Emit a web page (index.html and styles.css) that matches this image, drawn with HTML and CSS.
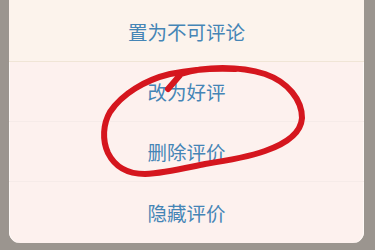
FILE: index.html
```html
<!DOCTYPE html>
<html lang="zh-CN">
<head>
<meta charset="utf-8">
<link rel="stylesheet" href="styles.css">
</head>
<body>
<div class="screen">
  <div class="sheet">
    <div class="item item-first">置为不可评论</div>
    <div class="item">改为好评</div>
    <div class="item">删除评价</div>
    <div class="item item-last">隐藏评价</div>
  </div>
  <svg class="scribble" width="375" height="250" viewBox="0 0 375 250">
    <path d="M168 89 L181 74 C205 66 240 66 265 74 C288 82 302 100 302 118 C301 133 288 143 265 151 C245 158 225 161 205 164 C185 168 165 173 145 174 C128 174 115 167 108 153 C102 140 103 124 110 112 C122 94 145 80 170 74 C195 69 215 68 235 69" fill="none" stroke="#d5161e" stroke-width="6" stroke-linecap="round" stroke-linejoin="round"/>
  </svg>
</div>
</body>
</html>
```

FILE: styles.css
```css
html, body {
  margin: 0;
  padding: 0;
}
body {
  width: 375px;
  height: 250px;
  overflow: hidden;
  background: #9b958f;
  font-family: "Noto Sans CJK SC", "Noto Sans", sans-serif;
}
.screen {
  position: relative;
  width: 375px;
  height: 250px;
  padding: 0 11px 0 9px;
  box-sizing: border-box;
}
.sheet {
  background: #fdf1ee;
  border-radius: 0 0 11px 11px;
  overflow: hidden;
  box-shadow: inset 1px 0 0 #fffaf7, inset -1px 0 0 #fffaf7;
}
.item {
  height: 60px;
  display: flex;
  align-items: center;
  justify-content: center;
  font-size: 19.5px;
  color: #4585b6;
  border-bottom: 1px solid #f6ebe8;
  box-sizing: border-box;
}
.item-first {
  height: 62px;
  padding-top: 2px;
  background: #fcf3ec;
  border-bottom-color: #f0e5d6;
}
.item-last {
  border-bottom: none;
  height: 61px;
}
.scribble {
  position: absolute;
  left: 0;
  top: 0;
}
```
